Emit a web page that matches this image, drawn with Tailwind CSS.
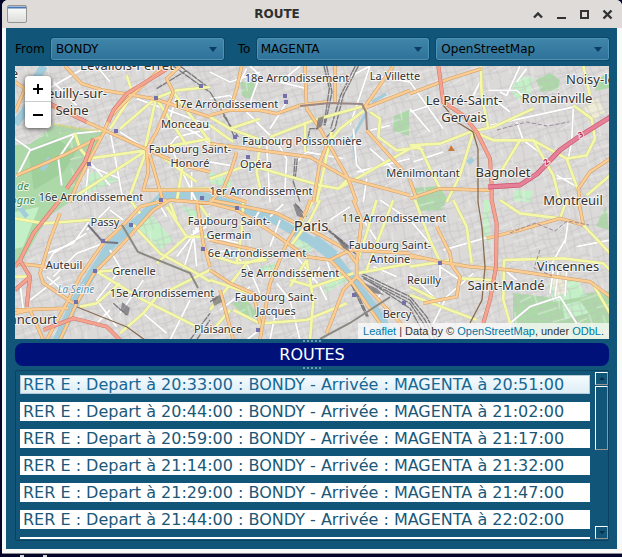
<!DOCTYPE html>
<html lang="fr">
<head>
<meta charset="utf-8">
<title>ROUTE</title>
<script src="https://cdn.jsdelivr.net/npm/@tailwindcss/browser@4"></script>
</head>
<body class="flex h-screen flex-col overflow-hidden bg-[#05052a] pl-[2px] font-['DejaVu_Sans',sans-serif] text-black">
<div class="flex min-h-0 flex-1 flex-col overflow-hidden rounded-t-md bg-[#f9faf8]">
  <header class="relative flex h-7 shrink-0 items-center justify-center bg-[#dedbd8] pr-[70px]">
    <svg class="absolute left-[5px] top-[5px] h-[18px] w-5" viewBox="0 0 20 18" aria-hidden="true">
      <defs><linearGradient id="win" x1="0" y1="0" x2="0" y2="1"><stop offset="0" stop-color="#fff"/><stop offset="1" stop-color="#dcdcda"/></linearGradient></defs>
      <rect x=".5" y=".5" width="19" height="17" rx="1.5" fill="url(#win)" stroke="#96948f"/>
      <rect x="1" y="1.5" width="18" height="2" fill="#4a78b4"/>
    </svg>
    <h1 class="text-xs font-bold text-[#2e3030]">ROUTE</h1>
    <div class="absolute right-[7px] top-[7px] flex gap-[7px] text-[#303234]">
      <button aria-label="Enrouler" class="size-4"><svg viewBox="0 0 16 16" fill="none" stroke="currentColor" stroke-width="2.4"><path d="M4 10.500 8 6.500l4 4"/></svg></button>
      <button aria-label="Réduire" class="size-4"><svg viewBox="0 0 16 16" fill="currentColor"><path d="M4 10h9v2H4z"/></svg></button>
      <button aria-label="Agrandir" class="size-4"><svg viewBox="0 0 16 16" fill="none" stroke="currentColor" stroke-width="2"><path d="M5 4h7v7H5z"/></svg></button>
      <button aria-label="Fermer" class="size-4"><svg viewBox="0 0 16 16" fill="none" stroke="currentColor" stroke-width="2.4"><path d="m4.500 3.500 8 8m0-8-8 8"/></svg></button>
    </div>
  </header>

  <main class="mb-1 ml-1 mr-[5px] flex min-h-0 flex-1 flex-col bg-[#115678] pb-2 pl-[9px] pr-2 pt-[10px]">
    <form class="flex h-[22px] shrink-0 items-center text-xs">
      <label for="from" class="w-[30px] shrink-0">From</label>
      <div class="relative ml-[6px] min-w-0 flex-1">
        <select id="from" class="block h-[22px] w-full appearance-none rounded-xs border border-[#4d93b8] bg-linear-to-b from-[#3f84a9] to-[#2f739a] pl-1 outline-1 outline-[#0d4767]"><option>BONDY</option></select>
        <svg class="pointer-events-none absolute right-[7px] top-[9px] h-[5px] w-2" viewBox="0 0 8 5" fill="#0a3c63"><path d="M0 0h8L4 5z"/></svg>
      </div>
      <label for="to" class="ml-[14px] w-3 shrink-0">To</label>
      <div class="relative ml-[7px] min-w-0 flex-1">
        <select id="to" class="block h-[22px] w-full appearance-none rounded-xs border border-[#4d93b8] bg-linear-to-b from-[#3f84a9] to-[#2f739a] pl-[3px] outline-1 outline-[#0d4767]"><option>MAGENTA</option></select>
        <svg class="pointer-events-none absolute right-[7px] top-[9px] h-[5px] w-2" viewBox="0 0 8 5" fill="#0a3c63"><path d="M0 0h8L4 5z"/></svg>
      </div>
      <div class="relative ml-[7px] min-w-0 flex-1">
        <select aria-label="Fond de carte" class="block h-[22px] w-full appearance-none rounded-xs border border-[#4d93b8] bg-linear-to-b from-[#3f84a9] to-[#2f739a] pl-1 outline-1 outline-[#0d4767]"><option>OpenStreetMap</option></select>
        <svg class="pointer-events-none absolute right-[7px] top-[9px] h-[5px] w-2" viewBox="0 0 8 5" fill="#0a3c63"><path d="M0 0h8L4 5z"/></svg>
      </div>
    </form>

    <section aria-label="Carte" class="relative mt-[6px] min-h-0 grow-[273] basis-0 overflow-hidden bg-[#d9d7d6]">
      <svg class="absolute inset-0 size-full" viewBox="15 66 594 273" preserveAspectRatio="xMidYMid slice" aria-label="Plan de Paris">
        <defs>
          <pattern id="streets" width="46" height="38" patternUnits="userSpaceOnUse" patternTransform="rotate(-18)">
            <path d="M0 5h19l8 6h19M0 14l12 3 14-2 20 5M0 25h46M0 33l20-3 26 4M5 0v14M12 5v20l-3 13M21 0l-2 15 3 23M29 11v27M37 0l-3 20 4 18M43 11v14M0 19h12M29 29h9" fill="none" stroke="#c0bebf" stroke-width=".8"/>
            <path d="M0 9h21M12 21l17 1M25 0l-2 11M33 30l13-2M16 30v8M3 25v13" fill="none" stroke="#efefef" stroke-width=".9"/>
          </pattern>
          <!-- Road geometry, one path per map tile, in thirds of a pixel -->
          <g id="white">
            <path transform="translate(10 62) scale(.3333)" d="M20 345 60 265 195 215 285 205M300 205 340 420M195 215 145 290 155 370M240 300 300 370M235 320 225 420M480 250 560 420M600 200 500 225 470 260M130 60 200 130M80 100 220 20M260 12 300 60M490 180 560 215 600 245M245 315 330 350M545 330V420M500 100 480 170M380 110 600 190M330 210 400 255M15 230 60 262"/>
            <path transform="translate(210 62) scale(.3333)" d="M120 12 150 40 110 150 200 240 230 290 225 380M270 12 210 60 290 80M390 60 480 12 420 190M430 200 440 310 470 340M540 190 480 205M0 30 60 60 150 30M440 330 600 290M0 110 60 100 90 130M230 120 180 200M490 40 600 60M260 300 290 270 400 290M0 300 60 310M170 250 180 420M470 350 460 420M480 260 560 330M110 20 90 60"/>
            <path transform="translate(410 62) scale(.3333)" d="M330 12 290 100 270 90M0 140 60 210M490 140 485 240 475 290M0 60 100 200M240 190 490 135M320 180 340 235 400 280M440 340 510 380M210 60 180 120M235 85H320L360 120M350 20 320 60M60 130 0 150M10 300 100 270M440 350H500M250 110 300 150"/>
            <path transform="translate(10 200) scale(.3333)" d="M230 100 130 160 100 210M240 60 190 130 110 160M280 130 200 160 130 230M300 20 230 90M300 150 340 220M440 0 470 50M600 40 500 170M560 80 520 210M550 90 560 200M590 80 500 130M330 210 260 300 320 380M400 240 330 340M110 230 170 280M300 330 250 380M540 300 480 420M400 340 470 400M30 250 40 330M150 230 60 300M340 60 300 30"/>
            <path transform="translate(210 200) scale(.3333)" d="M0 160 60 150 100 190M180 50 220 12M150 30 120 80M210 60 180 140M260 170 330 260 350 300M200 250 240 300 270 420M110 190 150 280M0 110 90 130M350 180 370 240M460 60 520 150 600 160M490 200 560 230M30 330 120 260M200 320 180 420M360 60 420 20M510 0 600 60M530 250 500 300M110 420 160 380M330 200 300 250"/>
            <path transform="translate(410 200) scale(.3333)" d="M240 110 100 150M465 120 415 210M300 370 360 320 450 290 500 370M90 200 150 240M430 210 420 280M470 210 465 290M445 210 435 290M475 60 465 130M190 220 110 290 70 370M0 220 90 310M290 215 320 240M90 190V230M500 140 600 120M0 60 60 130"/>
          </g>
          <g id="yellow">
            <path transform="translate(10 62) scale(.3333)" d="M365 100 300 200M438 108 330 200M438 108 405 260M438 108 500 85 600 75M438 108 530 250M235 290 410 265M410 265 200 400M410 265 360 400M410 265 600 230M195 215 210 260 235 290M350 40 370 100M490 90 600 240M430 265 560 360M520 300 500 420M400 385 600 380"/>
            <path transform="translate(210 62) scale(.3333)" d="M0 165 60 200 170 240M180 225 310 175 470 130M470 140 390 200 350 250M365 210 340 330 320 420M120 310 330 370 385 380 600 260M480 150 510 170 505 225 560 265 600 260M150 240 140 330 155 400M0 190 70 240M415 350 385 380M0 350 140 300M60 200 150 170M285 180V270"/>
            <path transform="translate(410 62) scale(.3333)" d="M212 12 215 100 235 200M0 250 90 245 180 210 250 195 370 140M190 210 150 340 110 420M205 215 250 235 370 235 470 290 530 280 555 230 545 170 490 130M370 235 430 340 450 420M330 235 260 350M470 290 510 400M0 260 30 255 60 320 90 380M600 340 530 400M520 12 540 100M0 250 40 265"/>
            <path transform="translate(10 200) scale(.3333)" d="M15 55 100 70 240 60 330 60M370 75 450 160 560 220 600 245M470 20 530 110 600 110M530 110 440 190M260 215 330 210M260 215 400 300 600 400M600 210 440 290 400 340 330 400M330 250 260 310 210 320M15 230H60M360 0 390 40M560 0 600 60M480 10 500 60"/>
            <path transform="translate(210 200) scale(.3333)" d="M330 0 300 60 240 140M290 180 310 300 300 420M0 330 110 190 200 160M0 240 120 280M70 330 150 370 290 360 410 310M440 220 600 190M440 190 470 100 500 0M100 0 95 100 80 190M550 0 470 210M0 400 60 330M240 260 290 180M0 165 80 190 170 180M430 220 310 260 240 240M310 0 260 90"/>
            <path transform="translate(410 200) scale(.3333)" d="M15 0 60 120 90 185M130 0 170 80 185 190M270 0 330 40 450 55 470 0M280 180 460 175 580 190 600 210M282 180 280 300 300 370M0 200 130 180M150 235 250 240M520 75 600 160M545 245 600 340M0 285 200 360M0 260 80 300"/>
          </g>
          <g id="orange">
            <path transform="translate(10 62) scale(.3333)" d="M165 12 215 65 280 85 370 100 430 110 600 165M285 200 300 165 365 100 410 60 460 12M120 130 165 150 285 205 410 262 520 310 600 330M20 340 160 280 270 225M410 262 440 210 490 90M490 90 470 50 510 12M410 262 415 330 400 385 600 385M415 265 460 420M285 205 240 290 200 370 180 420M15 150 45 80 15 60"/>
            <path transform="translate(210 62) scale(.3333)" d="M0 160 55 145 150 145 200 155 270 130 350 120M95 12 80 80 60 145M285 12 290 140 330 200 415 350 440 420M375 12V120M550 12 460 140M460 140 600 85M470 205 600 350M0 245 300 285 415 350M415 350 600 400M350 250 330 300 310 420M80 270 65 320 40 380 0 420M0 385 110 420"/>
            <path transform="translate(410 62) scale(.3333)" d="M0 95 120 50 215 20M0 410 90 380 240 385M600 290 540 330 505 380 510 420M0 355 20 410"/>
            <path transform="translate(10 200) scale(.3333)" d="M600 10 480 0 430 30 385 80M470 0 390 20 350 65 280 130 210 230 175 300 110 420M150 40 120 120 90 220 100 250 190 310M15 190 110 200M100 420 60 330 15 340M560 0 580 130 600 200M385 80 330 140 255 215 200 310 150 420M175 325 15 330"/>
            <path transform="translate(210 200) scale(.3333)" d="M0 10 80 30 190 100 290 170 360 180 420 150 600 160M0 0 80 15 200 40 260 70 340 110 410 150 440 190 440 230M230 130 180 250 160 360 150 420M0 210 60 250 130 280 150 370M30 270 70 420M430 0 455 60 440 190M440 230 400 270 350 400M440 230 600 400M360 180 420 240 510 370M230 130 290 30 300 0M0 120 180 160 290 170"/>
            <path transform="translate(410 200) scale(.3333)" d="M80 80 120 160 125 195 150 230 140 290 40 310M0 165 90 185 180 200 300 210 540 245 600 290M230 115 330 90 450 55 520 75M505 0 520 75M0 170 40 175"/>
          </g>
          <g id="red">
            <path transform="translate(10 62) scale(.3333)" d="M295 180 310 145 350 95 440 40 480 15M250 230 225 300 170 380M120 125 160 145 230 180"/>
            <path transform="translate(410 62) scale(.3333)" d="M85 12 100 120 160 160 200 210 240 290 245 370 245 420"/>
            <path transform="translate(10 200) scale(.3333)" d="M150 0 70 100 30 180 60 230 50 320M100 390 190 355 290 380 330 420M30 180 15 200M60 230 15 270"/>
            <path transform="translate(410 200) scale(.3333)" d="M245 0 260 70 258 200 240 300 220 370"/>
          </g>
          <g id="rail">
            <path transform="translate(10 62) scale(.3333)" d="M490 12 570 70 600 90M510 12 600 80M440 80 530 25"/>
            <path transform="translate(210 62) scale(.3333)" d="M342 12 358 80 342 190M350 12 366 90 345 190M445 12 400 100 375 200 345 230M436 12 392 100 362 200M0 90 50 170 75 230M40 160 85 225M285 270 300 200 330 200M255 290 250 360 270 420M262 290 255 355"/>
            <path transform="translate(210 200) scale(.3333)" d="M455 220 600 290M455 228 600 300M460 235 600 310M470 240 600 325M425 255 470 350M430 255 475 350M255 10 290 50M350 85 430 150M355 92 440 165M0 305 30 290"/>
            <path transform="translate(410 200) scale(.3333)" d="M0 290 50 350 85 420M0 300 45 360 75 420M0 310 40 370 62 420M0 325 30 380"/>
            <path transform="translate(10 200) scale(.3333)" d="M310 310 350 345M540 420 600 340M560 420 600 360"/>
          </g>
        </defs>
        <rect x="15" y="66" width="594" height="273" fill="#dcdad9"/>
        <!-- Parks -->
        <g fill="#add9a9">
          <path d="M15 145 30 144 55 124 105 132 90 158 70 202 52 214 40 230 22 262H15z"/>
          <path d="M240 82h14l2 10-6 7-8-3zM536 80l14-7 10 7-2 10-17 2zM597 78l12-4v14l-14 3zM394 116l15-6v26l-16-5z"/>
          <path d="M413 188l26-2 8 12-4 12-23 1zM231 303l16-3 10 13-7 7zM513 293l34 4 62-6v48h-90l-6-20z"/>
          <path d="M606 206 596 226l13 4z"/>
        </g>
        <g fill="#c3f0c6">
          <path d="M138 227l12-14 23 27-13 10zM327 280l20-10 3 10-26 13zM260 267l16-4-3 10-13 2zM484 200l6 0v44l-7-6zM518 76l15 2-2 16-14 6-6-10zM210 172l22 8-2 8-20-5zM15 212l24-5-16 40-8 2zM547 282l30-4 10 18-34 6zM562 305l18-4 9 12-24 6zM120 180l-40 16 12-25zM515 190l18 1-2 11-18-1zM180 205l18 6-4 12zM300 238l14 7-4 8-16-8z"/>
        </g>
        <path d="M583 107l14-9 9 14-12 8zM550 280l14-8 4 20-12 4z" fill="#eeecd4"/>
        <path d="M28 150l28-12 20 14-12 20-30 18z" fill="#9fd09b"/>
        <rect x="70" y="66" width="539" height="273" fill="url(#streets)" opacity=".75"/>
        <path d="M15 66h55v65l-30 8-25 6zM15 262l10-8 45-42v127H15z" fill="url(#streets)" opacity=".75"/>
        <!-- Water -->
        <g fill="none" stroke="#a4cddc" stroke-linejoin="round">
          <path stroke-width="8" d="M15 124 35 98 30 88 44 66"/>
          <path stroke-width="9" d="M56 343 76 300 93 272 110 246 134 224 150 209 161 198 178 194 205 197 230 204 270 217 290 229 310 240 333 256 350 277 371 304 383 322 392 343"/>
          <path stroke-width="12" d="M313 240 334 256"/>
          <path stroke-width="3" d="M367 112 352 138 357 164M372 102l14-8"/>
          <path stroke-width="5" d="M468 163l5-4M18 205l9 12M50 158l-8 12"/>
        </g>
        <g fill="none" stroke-linejoin="round">
          <use href="#white" stroke="#c4c2c2" stroke-width="7"/><use href="#white" stroke="#fff" stroke-width="5.500"/>
          <use href="#rail" stroke="#68686c" stroke-width="4" stroke-opacity=".85" stroke-dasharray="20 2"/>
          <use href="#yellow" stroke="#c9cb8e" stroke-width="10"/><use href="#yellow" stroke="#f5f8a8" stroke-width="8"/>
          <use href="#orange" stroke="#cf9e62" stroke-width="10.500"/><use href="#orange" stroke="#fbcd94" stroke-width="7.500"/>
          <use href="#red" stroke="#cf7466" stroke-width="12"/><use href="#red" stroke="#f4a391" stroke-width="9"/>
          <path d="M488 187 520 185 537 174 560 150 583 134 612 116" stroke="#c9566f" stroke-width="5"/>
          <path d="M488 187 520 185 537 174 560 150 583 134 612 116" stroke="#e58098" stroke-width="3.500"/>
        </g>
        <!-- Railway and metro lines -->
        <g fill="none">
          <path d="M300 106 330 103 362 104 366 112 367 130" stroke="#9b8784" stroke-width="2"/>
          <path d="M443 105 457 122 473 132 478 149 478 202 482 227 485 267 482 300 470 323M77 307 127 327 145 340" stroke="#876c50" stroke-width="1.300"/>
          <path d="M122 225 138 252 190 273 198 288M390 297 350 323 320 339" stroke="#8a8a82" stroke-width="2"/>
          <path d="M88 225 103 242 118 243" stroke="#77747f" stroke-width="2"/>
          <path d="M510 233l25-10 20 8 12-10 22 4M497 130l30-8 20 4 22-4M540 250l-6 18 18 8" stroke="#9a8c9e" stroke-dasharray="4 2"/>
          <path d="M53 124 80 129 105 131" stroke="#e6d56a" stroke-width="2" stroke-dasharray="2 2"/>
        </g>
        <g fill="#7470ac">
          <path d="M114 129h4v4h-4zM154 96h4v4h-4zM87 162h4v4h-4zM199 84h4v4h-4zM159 198h4v4h-4zM200 196h4v4h-4zM283 94h4v4h-4zM284 100h4v4h-4zM246 155h4v4h-4zM233 135h4v4h-4zM438 261h4v4h-4zM129 223h4v4h-4zM101 239h4v4h-4zM93 269h4v4h-4zM74 300h4v4h-4zM201 247h4v4h-4zM235 206h4v4h-4zM256 328h4v4h-4zM352 293h4v4h-4zM402 301h4v4h-4z"/>
        </g>
        <path d="m451 145 4 6h-7z" fill="#c67a3c"/>
        <g fill="#6c6b72" opacity=".7"><path d="M318 118l6-2-2 10-6 4zM293 204l6 2 5 12-7-2zM332 232l10 8 8 12-7-4zM212 298l8-3 2 7-8 4zM364 283l12 5 8 7-10-2zM122 302l8 6-2 8-7-6z"/></g>
        <!-- Place names -->
        <g font-family="'Noto Sans',sans-serif" font-size="11" fill="#333" stroke="#fff" stroke-opacity=".75" stroke-width="2" stroke-linejoin="round" paint-order="stroke" text-anchor="middle">
          <text x="226" y="108">17e Arrondissement</text><text x="185" y="128">Monceau</text>
          <text x="190" y="153">Faubourg Saint-</text><text x="190" y="167">Honoré</text>
          <text x="256" y="168">Opéra</text><text x="297" y="82">18e Arrondissement</text>
          <text x="395" y="80">La Villette</text><text x="302" y="145">Faubourg Poissonnière</text>
          <text x="423" y="177">Ménilmontant</text><text x="261" y="195">1er Arrondissement</text>
          <text x="91" y="201">16e Arrondissement</text><text x="394" y="222">11e Arrondissement</text>
          <text x="105" y="226">Passy</text><text x="229" y="225">Faubourg Saint-</text><text x="229" y="239">Germain</text>
          <text x="257" y="257">6e Arrondissement</text><text x="390" y="249">Faubourg Saint-</text><text x="390" y="263">Antoine</text>
          <text x="64" y="269">Auteuil</text><text x="134" y="275">Grenelle</text><text x="290" y="277">5e Arrondissement</text>
          <text x="424" y="284">Reuilly</text><text x="162" y="297">15e Arrondissement</text>
          <text x="276" y="301">Faubourg Saint-</text><text x="276" y="315">Jacques</text>
          <text x="397" y="318">Bercy</text><text x="218" y="333">Plaisance</text>
          <g font-size="13">
            <text x="127" y="70">Levallois-Perret</text><text x="72" y="98">Neuilly-sur-</text><text x="72" y="115">Seine</text>
            <text x="464" y="105">Le Pré-Saint-</text><text x="464" y="122">Gervais</text>
            <text x="557" y="103">Romainville</text><text x="566" y="84" text-anchor="start">Noisy-le-Sec</text>
            <text x="503" y="177">Bagnolet</text><text x="568" y="271">Vincennes</text><text x="506" y="290">Saint-Mandé</text>
            <text x="573" y="205">Montreuil</text><text x="18" y="78" text-anchor="end">e</text>
            <text x="57" y="324" text-anchor="end">Boulogne-Billancourt</text>
          </g>
          <text x="311" y="231" font-size="15">Paris</text>
          <g font-style="italic"><text x="23" y="190" fill="#3c8a4c">de</text><text x="35" y="204" text-anchor="end" fill="#3c8a4c">Boulogne</text><text x="76" y="293" font-size="10" fill="#5a93b8">La Seine</text></g>
          <g font-size="8" font-weight="bold" fill="#b8334f"><text x="582" y="137" transform="rotate(-30 582 137)">3</text><text x="548" y="164" transform="rotate(-40 548 164)">2</text></g>
        </g>
      </svg>
      <div class="absolute left-[10px] top-[10px] w-[26px] overflow-hidden rounded-sm bg-white shadow-[0_1px_5px_rgba(0,0,0,0.65)]">
        <button aria-label="Zoom avant" class="flex h-[26px] w-full items-center justify-center border-b border-[#ccc]"><svg class="size-[10px]" viewBox="0 0 10 10"><path d="M4 0h2v4h4v2H6v4H4V6H0V4h4z"/></svg></button>
        <button aria-label="Zoom arrière" class="flex h-[26px] w-full items-center justify-center"><svg class="size-[10px]" viewBox="0 0 10 10"><path d="M0 4h10v2H0z"/></svg></button>
      </div>
      <p class="absolute bottom-0 right-0 whitespace-nowrap bg-white/70 px-[5px] font-['Liberation_Sans',sans-serif] text-[11px] leading-4 text-[#333]"><a href="#" class="text-[#0078a8]">Leaflet</a> | Data by © <a href="#" class="text-[#0078a8]">OpenStreetMap</a>, under <a href="#" class="text-[#0078a8]">ODbL</a>.</p>
    </section>

    <div class="flex h-1 shrink-0 items-center justify-center"><span class="w-[18px] border-t-2 border-dotted border-[#6b9ab2]"></span></div>
    <h2 class="h-[23px] shrink-0 rounded-lg bg-[#00117a] text-center text-base leading-[23px] text-white">ROUTES</h2>
    <div class="flex h-1 shrink-0 items-center justify-center"><span class="w-[18px] border-t-2 border-dotted border-[#6b9ab2]"></span></div>

    <section aria-label="Itinéraires" class="flex min-h-0 grow-[167] basis-0 gap-[5px] overflow-hidden rounded-xs border border-[#0b4260] pb-px pl-1 pt-px">
      <ul class="flex min-h-0 min-w-0 flex-1 flex-col gap-2 overflow-hidden pt-[3px] text-base text-[#1b5877]">
        <li class="shrink-0"><button class="block h-[19px] w-full whitespace-nowrap border border-[#b5cbd8] bg-linear-to-b from-[#f4fbff] to-[#dfeef6] pl-[2px] text-left leading-[17px] text-[#166793]">RER E : Depart à 20:33:00 : BONDY - Arrivée : MAGENTA à 20:51:00</button></li>
        <li class="shrink-0"><button class="block h-[19px] w-full whitespace-nowrap bg-white pl-[3px] text-left leading-[19px]">RER E : Depart à 20:44:00 : BONDY - Arrivée : MAGENTA à 21:02:00</button></li>
        <li class="shrink-0"><button class="block h-[19px] w-full whitespace-nowrap bg-white pl-[3px] text-left leading-[19px]">RER E : Depart à 20:59:00 : BONDY - Arrivée : MAGENTA à 21:17:00</button></li>
        <li class="shrink-0"><button class="block h-[19px] w-full whitespace-nowrap bg-white pl-[3px] text-left leading-[19px]">RER E : Depart à 21:14:00 : BONDY - Arrivée : MAGENTA à 21:32:00</button></li>
        <li class="shrink-0"><button class="block h-[19px] w-full whitespace-nowrap bg-white pl-[3px] text-left leading-[19px]">RER E : Depart à 21:29:00 : BONDY - Arrivée : MAGENTA à 21:47:00</button></li>
        <li class="shrink-0"><button class="block h-[19px] w-full whitespace-nowrap bg-white pl-[3px] text-left leading-[19px]">RER E : Depart à 21:44:00 : BONDY - Arrivée : MAGENTA à 22:02:00</button></li>
        <li class="shrink-0"><button class="block h-[19px] w-full whitespace-nowrap bg-white pl-[3px] text-left leading-[19px]">RER E : Depart à 21:59:00 : BONDY - Arrivée : MAGENTA à 22:17:00</button></li>
      </ul>
      <div class="flex w-[13px] shrink-0 flex-col gap-px">
        <button aria-label="Défiler vers le haut" class="flex h-[13px] items-center justify-center border border-b-[#9a9490] border-l-white border-r-[#9a9490] border-t-white"><svg class="h-[3px] w-[6px]" viewBox="0 0 6 3" fill="#082c44"><path d="M0 3h6L3 0z"/></svg></button>
        <div class="min-h-0 flex-1"><div class="h-[46%] border border-b-[#9a9490] border-l-white border-r-[#9a9490] border-t-white"></div></div>
        <button aria-label="Défiler vers le bas" class="flex h-[13px] items-center justify-center border border-b-[#9a9490] border-l-white border-r-[#9a9490] border-t-white"><svg class="h-[3px] w-[6px]" viewBox="0 0 6 3" fill="#082c44"><path d="M0 0h6L3 3z"/></svg></button>
      </div>
    </section>
  </main>
</div>
<div class="flex h-1 shrink-0 items-end gap-[19px] border-t border-[#8c8c94] pl-[18px]"><span class="h-[2px] w-1 bg-[#d8d8dc]"></span><span class="h-[2px] w-1 bg-[#d8d8dc]"></span></div>
</body>
</html>
